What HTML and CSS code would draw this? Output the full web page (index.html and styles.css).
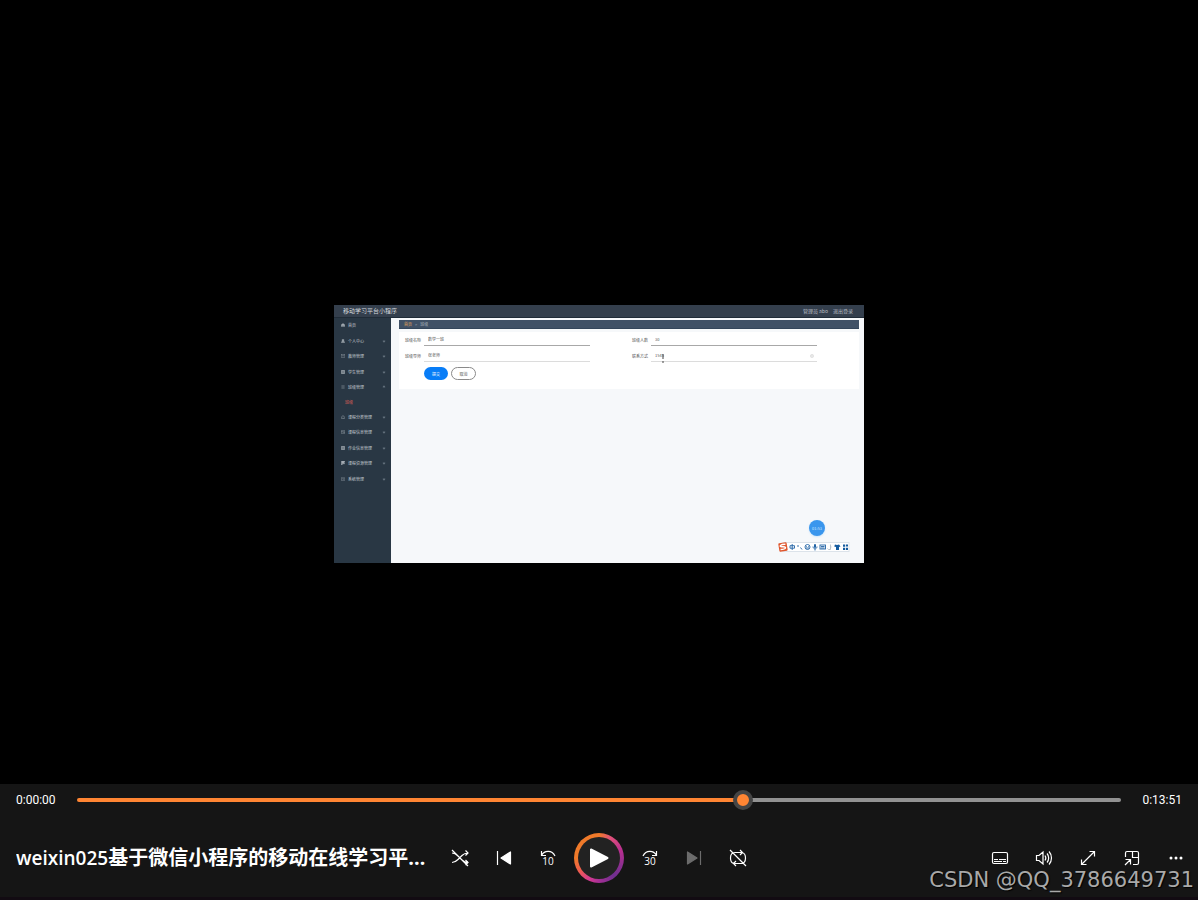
FILE: index.html
```html
<!DOCTYPE html>
<html lang="zh-CN">
<head>
<meta charset="utf-8">
<meta name="viewport" content="width=device-width, initial-scale=1">
<title>weixin025</title>
<link rel="stylesheet" href="styles.css">
</head>
<body>
<div class="player">
  <main class="stage">
    <div class="video">
      <header class="app-head"><span class="app-name">移动学习平台小程序</span><span class="app-user"><span>管理员 abo</span><span>退出登录</span></span></header>
      <div class="app-body">
        <ul class="menu">
          <li><svg viewBox="0 0 10 10"><path d="M0 5 5 1l5 4-1 1v3H6V6H4v3H1V6z" fill="currentColor"/></svg><span>首页</span></li>
          <li><svg viewBox="0 0 10 10"><path d="M3 1h4v4L6 6l3 1v2H1V7l3-1-1-1z" fill="currentColor"/></svg><span>个人中心</span><i></i></li>
          <li><svg viewBox="0 0 10 10"><path d="M0 1.500h9.500v7H.5v-7l4.500 4 4.500-4"/></svg><span>教师管理</span><i></i></li>
          <li><svg viewBox="0 0 10 10"><path d="M1 1h8v8H1zM3 3h4M3 5h4M3 7h4" stroke-width="2"/></svg><span>学生管理</span><i></i></li>
          <li><svg viewBox="0 0 10 10"><path d="M1 2h8M1 5h8M1 8h8"/></svg><span>班级管理</span><i class="up"></i></li>
          <li class="sub"><span>班级</span></li>
          <li><svg viewBox="0 0 10 10"><path d="M1 9V5l4-4 4 4v4zM3 6l3-3M4 8h3"/></svg><span>课程分类管理</span><i></i></li>
          <li><svg viewBox="0 0 10 10"><path d="M1 1h8v8H1zM1 4h6M4 6h5"/></svg><span>课程信息管理</span><i></i></li>
          <li><svg viewBox="0 0 10 10"><path d="M1 1h8v8H1zM3 3h4M3 5h4M3 7h4" stroke-width="2"/></svg><span>作业信息管理</span><i></i></li>
          <li><svg viewBox="0 0 10 10"><path d="M1 0h9L8 4l1 3H3v3H1z" fill="currentColor"/></svg><span>课程资源管理</span><i></i></li>
          <li><svg viewBox="0 0 10 10"><path d="M0 2h9.500v6.500H.5V2m2 4 2-2 1 2 2-2"/></svg><span>系统管理</span><i></i></li>
        </ul>
        <section class="content">
          <div class="crumb"><b>首页</b><span>&gt;</span><span>班级</span></div>
          <form class="form">
            <div class="fields">
              <label class="field dark"><span>班级名称</span><input type="text" value="数学一班"></label>
              <label class="field dark"><span>班级人数</span><input type="text" value="30"></label>
              <label class="field"><span>班级导师</span><input type="text" value="张老师"></label>
              <label class="field current"><span>联系方式</span><input type="text" value="1545"><svg class="clear" viewBox="0 0 10 10"><circle cx="5" cy="5" r="4"/><path d="m3 3 4 4M7 3 3 7"/></svg><svg class="caret" viewBox="0 0 4 9"><path d="M2 0v5M1 8h2"/></svg></label>
            </div>
            <div class="actions"><button type="button" class="save">提交</button><button type="button" class="cancel">取消</button></div>
          </form>
          <div class="desk">
            <div class="clock">01:53</div>
            <div class="ime">
              <svg viewBox="0 0 72 12">
                <rect x="5" y="1.500" width="66" height="9" fill="#fff" stroke="#dce3ea"/>
                <g transform="rotate(-9 5 6)"><rect x=".8" y="1.800" width="8.400" height="8.400" rx="1" fill="#df552c"/><path d="M7.800 3.700C2.500 2.800 1 5 3.700 5.600c5.700.3 4.500 3.400-1.500 2.500" fill="none" stroke="#fff" stroke-width="1.400"/></g>
                <g fill="none" stroke="#2163a5" stroke-width=".9"><path d="M12 4.700h4.500v2.500H12zM14.200 3v6M20 4v2M22.500 6.500l1.500 2"/><circle cx="29.500" cy="6" r="2.500"/><path d="M28.500 5v.7M30.500 5v.7M28 7h3M35 5.500c0 3 4 3 4 0M37 8v1.500"/><rect x="42" y="4" width="5.500" height="4"/><path d="M43 5.500h3.500M43 7h3.500"/></g>
                <rect x="36" y="3" width="2" height="4" rx="1" fill="#2163a5"/><path d="M52.500 3.500v5h-2l-1-1M52 6h1.500" fill="none" stroke="#b9c3cc"/>
                <path d="m57 3.500 2 .5 2-.5 1.500 2-1.500.5v3h-3v-3l-1.800-.5zM65 3.500h2.200v2.200H65zM68 3.500h2v2h-2zM65 6.700h2.200V9H65zM68 6.700h2V9h-2z" fill="#145b9f"/>
              </svg>
            </div>
          </div>
        </section>
      </div>
    </div>
  </main>
  <footer class="bar">
    <div class="seek">
      <span class="time">0:00:00</span>
      <input type="range" min="0" max="10000" value="6406" aria-label="播放进度">
      <span class="time end">0:13:51</span>
    </div>
    <div class="controls">
      <h1 class="title"><span class="latin">weixin025</span>基于微信小程序的移动在线学习平台</h1>
      <div class="group">
        <button type="button" class="btn" aria-label="随机播放"><svg viewBox="0 0 20 20"><path d="M2 5c3 0 4 1 6 3l4 4c2 2 3 2.500 6 2.500M2 14.500c3 0 4-1 6-3l4-4C14 5.500 15 5 18 5M15.500 2.500 18 5l-2.500 2.500M15.500 12l2.500 2.500-2.500 2.500M2 2l16 16"/></svg></button>
        <button type="button" class="btn" aria-label="上一个"><svg viewBox="0 0 20 20"><path d="M3.500 3v14"/><path d="M16.500 4v12L7 10z" fill="currentColor" stroke-linejoin="round"/></svg></button>
        <button type="button" class="btn" aria-label="后退 10 秒"><svg viewBox="0 0 20 20"><path d="M3.500 3v4.500H8M3.500 7.500C6.500 2 14 2 17 8"/><text x="10" y="17">10</text></svg></button>
        <button type="button" class="play" aria-label="播放"><svg viewBox="0 0 20 20"><path d="M2 1.500v17L18.500 10z" fill="currentColor" stroke-width="2" stroke-linejoin="round"/></svg></button>
        <button type="button" class="btn" aria-label="前进 30 秒"><svg viewBox="0 0 20 20"><path d="M16.500 3v4.500H12M16.500 7.500C13.500 2 6 2 3 8"/><text x="10" y="17">30</text></svg></button>
        <button type="button" class="btn off" aria-label="下一个" disabled><svg viewBox="0 0 20 20"><path d="M16.500 3v14"/><path d="M3.500 4v12L13 10z" fill="currentColor" stroke-linejoin="round"/></svg></button>
        <button type="button" class="btn" aria-label="循环关闭"><svg viewBox="0 0 20 20"><path d="M6 15.500C3.500 15 2.500 13 2.500 10S4 4.500 7 4.500h7M12 2l2.500 2.500L12 7M14 4.500c2.500.5 3.500 2.500 3.500 5.500s-1.500 5.500-4.500 5.500H6M8 13l-2.500 2.500L8 18M2 2l16 16"/></svg></button>
      </div>
      <div class="group right">
        <button type="button" class="btn" aria-label="字幕"><svg viewBox="0 0 20 20"><rect x="2.500" y="4.500" width="15" height="11" rx="1.500"/><path d="M4 11.500h4M9 11.500h7M4 13.500h8M13 13.500h3"/></svg></button>
        <button type="button" class="btn" aria-label="音量"><svg viewBox="0 0 20 20"><path d="M2.500 7.500v5h2.500l4 3.500V4L5 7.500zM11 7.500c1 1.500 1 3.500 0 5M13 5.500c2.200 2.500 2.200 6.500 0 9M15 3.500c3.300 3.500 3.300 9.500 0 13"/></svg></button>
        <button type="button" class="btn" aria-label="全屏"><svg viewBox="0 0 20 20"><path d="M11.500 3.500h5v5M3.500 11.500v5h5M3.500 16.500l13-13"/></svg></button>
        <button type="button" class="btn" aria-label="迷你播放器"><svg viewBox="0 0 20 20"><path d="M3.500 9V5c0-1 .5-1.500 1.500-1.500h10c1 0 1.500.5 1.500 1.500v10c0 1-.5 1.500-1.500 1.500h-4M10.500 3.500v6h6M3 17l5.500-5.500M3.500 11.500h5v5"/></svg></button>
        <button type="button" class="btn" aria-label="更多"><svg viewBox="0 0 20 20"><g fill="currentColor" stroke="none"><circle cx="5" cy="10" r="1.500"/><circle cx="10" cy="10" r="1.500"/><circle cx="15" cy="10" r="1.500"/></g></svg></button>
      </div>
    </div>
    <div class="mark">CSDN @QQ_3786649731</div>
  </footer>
</div>
</body>
</html>
```
FILE: styles.css
```css
* { box-sizing: border-box; }
body { margin: 0; background: #000; color: #fff; font-family: "Open Sans", "Noto Sans CJK SC", sans-serif; }
button, input { font: inherit; color: inherit; border: 0; padding: 0; margin: 0; background: none; }
svg { fill: none; stroke: currentColor; display: block; }
.player { min-height: 100vh; display: flex; flex-direction: column; }
.stage { flex: 1; display: flex; align-items: center; justify-content: center; padding-top: 84px; }

.video { width: 530px; max-width: 100%; min-height: 258px; display: flex; flex-direction: column; background: #f6f8fa; font: 4px/6px "Noto Sans CJK SC", sans-serif; }
.app-head { height: 13px; display: flex; justify-content: space-between; align-items: center; padding: 0 11px 0 9px; background: #343f4d; border-bottom: 1px solid #202c38; color: #b7bdc4; }
.app-name { font-size: 6px; color: #d5d9dd; }
.app-user { display: flex; gap: 5px; font-size: 5px; }
.app-body { flex: 1; display: flex; }
.menu { width: 57px; margin: 0; padding: 0 0 76px; list-style: none; background: #293744; color: #c3c9cf; display: flex; flex-direction: column; }
.menu li { flex: 1; display: flex; align-items: center; gap: 3px; padding: 0 6px 1px 7px; white-space: nowrap; }
.menu svg { width: 4px; height: 4px; flex: none; opacity: .8; }
.menu i { width: 2px; height: 2px; margin-left: auto; border: solid #66737f; border-width: 0 1px 1px 0; transform: rotate(45deg); }
.menu .up { transform: rotate(225deg); }
.menu .sub { flex: none; height: 14px; padding-left: 11px; color: #dd5f57; }
.content { flex: 1; display: flex; flex-direction: column; padding: 2px 5px 10px 8px; }
.crumb { height: 9px; display: flex; align-items: center; gap: 3px; padding: 0 5px; background: #405166; border-bottom: 1px solid #34465b; color: #a8b2bd; }
.crumb b { font-weight: 400; color: #e0a55b; }
.form { margin-top: 3px; height: 57px; background: #fff; padding: 1px 42px 0 6px; color: #555; }
.fields { display: grid; grid-template-columns: 1fr 1fr; gap: 3px 42px; }
.field { position: relative; display: flex; height: 13px; }
.field span { width: 19px; line-height: 14px; }
.field input { flex: 1; min-width: 0; height: 13px; padding: 0 4px; border-bottom: 1px solid #dcdcdc; }
.field.dark input { border-color: #a8a8a8; }
.clear { position: absolute; right: 3px; top: 5px; width: 4px; height: 4px; color: #bbb; }
.caret { position: absolute; left: 29px; top: 5px; width: 4px; height: 9px; color: #444; }
.actions { display: flex; gap: 3px; padding: 5px 0 0 19px; }
.actions button { width: 24px; height: 13px; border-radius: 7px; }
.actions .save { background: #087df7; color: #fff; }
.actions .cancel { width: 25px; border: 1px solid #8a8a8a; background: #fff; }
.desk { margin-top: auto; display: flex; flex-direction: column; align-items: flex-end; gap: 5px; padding-right: 9px; }
.clock { width: 16px; height: 16px; margin-right: 25px; border-radius: 50%; background: #3a96ed; color: #cfe6ff; line-height: 16px; text-align: center; box-shadow: 0 1px 2px #cde5fa; }
.ime svg { width: 72px; height: 12px; stroke: none; }

.bar { position: relative; background: #151515; height: 116px; border-bottom: 3px solid #120b12; }
.seek { height: 32px; display: flex; align-items: center; padding: 0 16px; }
.time { width: 61px; font: 12px/16px Roboto, sans-serif; }
.end { text-align: right; }
.seek input { flex: 1; min-width: 0; height: 20px; appearance: none; }
.seek input::-webkit-slider-runnable-track { height: 4px; border-radius: 2px; background: linear-gradient(90deg, #ff8533 64%, #929292 64%); }
.seek input::-webkit-slider-thumb { appearance: none; width: 20px; height: 20px; margin-top: -8px; border-radius: 50%; border: 4px solid #454545; background: #ff8533; }
.controls { height: 84px; display: grid; grid-template-columns: 1fr auto 1fr; align-items: center; }
.title { margin: 0 12px 0 16px; min-width: 0; font-size: 20px; font-weight: 700; line-height: 28px; white-space: nowrap; overflow: hidden; text-overflow: ellipsis; }
.latin { font-size: 19px; font-weight: 600; }
.group { display: flex; align-items: center; }
.right { justify-content: flex-end; }
.btn { width: 44px; height: 44px; display: grid; place-items: center; }
.btn svg { width: 20px; height: 20px; stroke-width: 1.2; }
.btn text { font-size: 10px; text-anchor: middle; fill: currentColor; stroke: none; }
.off { color: #6c6c6c; }
.play { width: 50px; height: 50px; margin: 0 4px; border-radius: 50%; display: grid; place-items: center; border: 4px solid transparent; background: linear-gradient(#222, #222) padding-box, conic-gradient(#f07a2a 0deg, #e0507a 30deg, #b92f90 70deg, #8b2f90 110deg, #6f2f8f 140deg, #a52f95 180deg, #d53a90 205deg, #f0604a 240deg, #f07a2a 270deg) border-box; }
.play svg { width: 20px; height: 20px; }
.mark { position: absolute; right: 4px; bottom: 4px; font: 21px/26px "DejaVu Sans", sans-serif; color: #a9a9a9; text-shadow: 1px 1px 1px #000; pointer-events: none; }
```
